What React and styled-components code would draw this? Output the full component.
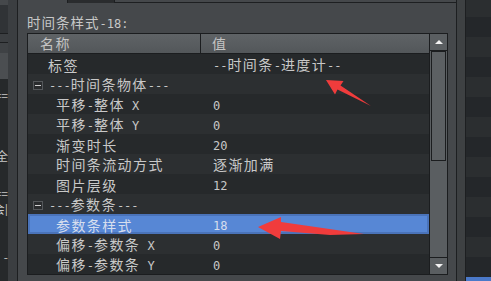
import React from "react"
import styled, { createGlobalStyle } from "styled-components"

const GlobalStyle = createGlobalStyle`
  html, body {
    margin: 0;
    padding: 0;
    background: #45484b;
  }
  body {
    font-family: "Noto Sans CJK SC", "Noto Sans", sans-serif;
  }
`

// Layout shell
const Screen = styled.div`
  position: relative;
  display: flex;
  width: 491px;
  height: 281px;
  overflow: hidden;
  background: #45484b;
`
const SideList = styled.div`
  width: 8px;
  flex-shrink: 0;
  display: flex;
  flex-direction: column;
  background: #26292b;
  overflow: hidden;
`
const SideCell = styled.div`
  height: ${p => p.$h}px;
  flex-shrink: 0;
  background: ${p => p.$bg || "transparent"};
  border-bottom: ${p => (p.$line ? "1px solid #1d1f21" : "none")};
  display: flex;
  justify-content: flex-end;
  align-items: center;
  color: #c8c8c8;
  font-size: 12px;
  line-height: ${p => p.$h}px;
  white-space: nowrap;
  overflow: hidden;
`
const Gutter = styled.div`
  width: ${p => p.$w}px;
  flex-shrink: 0;
  background: ${p => p.$bg};
  border-right: 1px solid #1d1f21;
`
const Center = styled.div`
  width: 438px;
  flex-shrink: 0;
  display: flex;
  flex-direction: column;
  border-right: 1px solid #1d1f21;
`
const TopBar = styled.div`
  height: 3px;
  display: flex;
`
const TopGap = styled.div`
  width: 49px;
`
const TopTab = styled.div`
  width: 46px;
  background: #2a2c2e;
  border-left: 1px solid #1d1f21;
  border-right: 1px solid #1d1f21;
`
const TopRule = styled.div`
  flex: 1;
  border-bottom: 1px solid #1d1f21;
  box-sizing: border-box;
  height: 3px;
`
const Title = styled.div`
  height: 30px;
  padding: 0 0 1px 9px;
  box-sizing: border-box;
  display: flex;
  align-items: flex-end;
  font-size: 13.5px;
  line-height: 16px;
  letter-spacing: 1px;
  color: #c8c8c8;
`

// Property table
const Table = styled.div`
  margin-left: 9px;
  width: 421px;
  height: 242px;
  box-sizing: border-box;
  border: 1px solid #1b1d1f;
  display: flex;
`
const Body = styled.div`
  width: 401px;
  display: flex;
  flex-direction: column;
`
const Header = styled.div`
  height: 20px;
  box-sizing: border-box;
  display: grid;
  grid-template-columns: 173px 1fr;
  background: linear-gradient(#5f6366, #53575a);
  border-bottom: 1px solid #1b1d1f;
`
const HeadCell = styled.div`
  padding-left: ${p => p.$pad}px;
  border-right: ${p => (p.$divider ? "1px solid #1b1d1f" : "none")};
  font-size: 14px;
  line-height: 19px;
  letter-spacing: 1.4px;
  color: #c4c4c4;
`
const Row = styled.div`
  height: 20px;
  display: grid;
  grid-template-columns: 174px 1fr;
  align-items: center;
  font-size: 14px;
  letter-spacing: 1.4px;
  line-height: 20px;
  white-space: pre;
  color: ${p => (p.$selected ? "#d6deee" : "#c8c8c8")};
  background: ${p => (p.$selected ? "#5787d5" : p.$odd ? "#2c2f31" : "#26292b")};
  box-shadow: ${p => (p.$selected ? "inset 0 0 0 2px #4a73b9" : "none")};
`
const NameCell = styled.div`
  display: flex;
  align-items: center;
  padding-left: ${p => p.$pad}px;
`
const Label = styled.span`
  white-space: pre;
`
const ValueCell = styled.div`
  padding-left: 11px;
`
const Expander = styled.div`
  width: 10px;
  height: 9px;
  box-sizing: border-box;
  margin-right: 6px;
  border: 1px solid #55585b;
  background: #2a2c2e;
  display: flex;
  align-items: center;
  justify-content: center;
  &::after {
    content: "";
    width: 6px;
    height: 1px;
    background: #d0d0d0;
  }
`
const Lat = styled.span`
  font-family: "DejaVu Sans Mono", monospace;
  font-size: 12px;
  letter-spacing: 0;
`

// Scrollbar
const ScrollBar = styled.div`
  width: 17px;
  border-left: 1px solid #1b1d1f;
  display: flex;
  flex-direction: column;
  background: #5a5e61;
`
const ArrowBtn = styled.div`
  height: 17px;
  box-sizing: border-box;
  flex-shrink: 0;
  display: flex;
  align-items: center;
  justify-content: center;
  border-${p => (p.$down ? "top" : "bottom")}: 1px solid #1b1d1f;
  &::after {
    content: "";
    border-left: 4px solid transparent;
    border-right: 4px solid transparent;
    border-${p => (p.$down ? "top" : "bottom")}: 4px solid #f2f2f2;
  }
`
const Track = styled.div`
  flex: 1;
  padding: 0 1px;
`
const Thumb = styled.div`
  height: 110px;
  box-sizing: border-box;
  border: 1px solid #1b1d1f;
  background: #5c6063;
`

// Right list stripes
const Stripes = styled.div`
  width: 25px;
  flex-shrink: 0;
  display: flex;
  flex-direction: column;
  margin-top: -3px;
`
const Stripe = styled.div`
  height: 20px;
  flex-shrink: 0;
  background: ${p => (p.$blue ? "#4b79c9" : p.$odd ? "#24272a" : "#2b2e30")};
`

const Overlay = styled.svg`
  position: absolute;
  left: 0;
  top: 0;
  pointer-events: none;
`

function Txt({ children }) {
  const parts = String(children)
    .split(/([\u3400-\u9fff]+)/)
    .filter(Boolean)
    .map((part, i) =>
      /[\u3400-\u9fff]/.test(part) ? <span key={i}>{part}</span> : <Lat key={i}>{part}</Lat>
    )
  return <Label>{parts}</Label>
}

const rows = [
  { name: "标签", value: "--时间条-进度计--", level: 0 },
  { name: "---时间条物体---", group: true },
  { name: "平移-整体 X", value: "0", level: 1 },
  { name: "平移-整体 Y", value: "0", level: 1 },
  { name: "渐变时长", value: "20", level: 1 },
  { name: "时间条流动方式", value: "逐渐加满", level: 1 },
  { name: "图片层级", value: "12", level: 1 },
  { name: "---参数条---", group: true },
  { name: "参数条样式", value: "18", level: 1, selected: true },
  { name: "偏移-参数条 X", value: "0", level: 1 },
  { name: "偏移-参数条 Y", value: "0", level: 1 },
]

const sideCells = [
  { h: 5, bg: "#45484b" },
  { h: 28, bg: "#303336", line: true },
  { h: 8, bg: "#3c3f42", line: true },
  { h: 10, bg: "#3f4245" },
  { h: 26, bg: "#4b4e51" },
  { h: 8 },
  { h: 16, text: "==" },
  { h: 45 },
  { h: 16, text: "安全" },
  { h: 22 },
  { h: 14, text: "==" },
  { h: 2 },
  { h: 14, text: "会|" },
  { h: 34 },
  { h: 14, text: "-" },
]

export default function App() {
  return (
    <Screen>
      <GlobalStyle />
      <SideList>
        {sideCells.map((c, i) => (
          <SideCell key={i} $h={c.h} $bg={c.bg} $line={c.line}>{c.text}</SideCell>
        ))}
      </SideList>
      <Gutter $w={9} $bg="#3b3e41" />
      <Center>
        <TopBar>
          <TopGap />
          <TopTab />
          <TopRule />
        </TopBar>
        <Title><Txt>时间条样式-18:</Txt></Title>
        <Table>
          <Body>
            <Header>
              <HeadCell $pad={12} $divider>名称</HeadCell>
              <HeadCell $pad={11}>值</HeadCell>
            </Header>
            {rows.map((r, i) => (
              <Row key={i} $odd={i % 2 === 1} $selected={r.selected}>
                {r.group ? (
                  <NameCell $pad={5}>
                    <Expander />
                    <Txt>{r.name}</Txt>
                  </NameCell>
                ) : (
                  <NameCell $pad={r.level === 0 ? 20 : 28}>
                    <Txt>{r.name}</Txt>
                  </NameCell>
                )}
                <ValueCell>{r.value && <Txt>{r.value}</Txt>}</ValueCell>
              </Row>
            ))}
          </Body>
          <ScrollBar>
            <ArrowBtn />
            <Track>
              <Thumb />
            </Track>
            <ArrowBtn $down />
          </ScrollBar>
        </Table>
      </Center>
      <Gutter $w={8} $bg="#3e4143" />
      <Stripes>
        {Array.from({ length: 15 }, (_, i) => (
          <Stripe key={i} $odd={i % 2 === 1} $blue={i === 14} />
        ))}
      </Stripes>
      <Overlay width="491" height="281" viewBox="0 0 491 281">
        <polygon
          points="326,80 343.5,81 340.5,85.5 371,106 337.5,89.5 335,94.5"
          fill="#f03c3c"
        />
        <polygon
          points="258,227 281,217 281,222 364,234 330,235 281,231 280,239"
          fill="#f03c3c"
        />
      </Overlay>
    </Screen>
  )
}
